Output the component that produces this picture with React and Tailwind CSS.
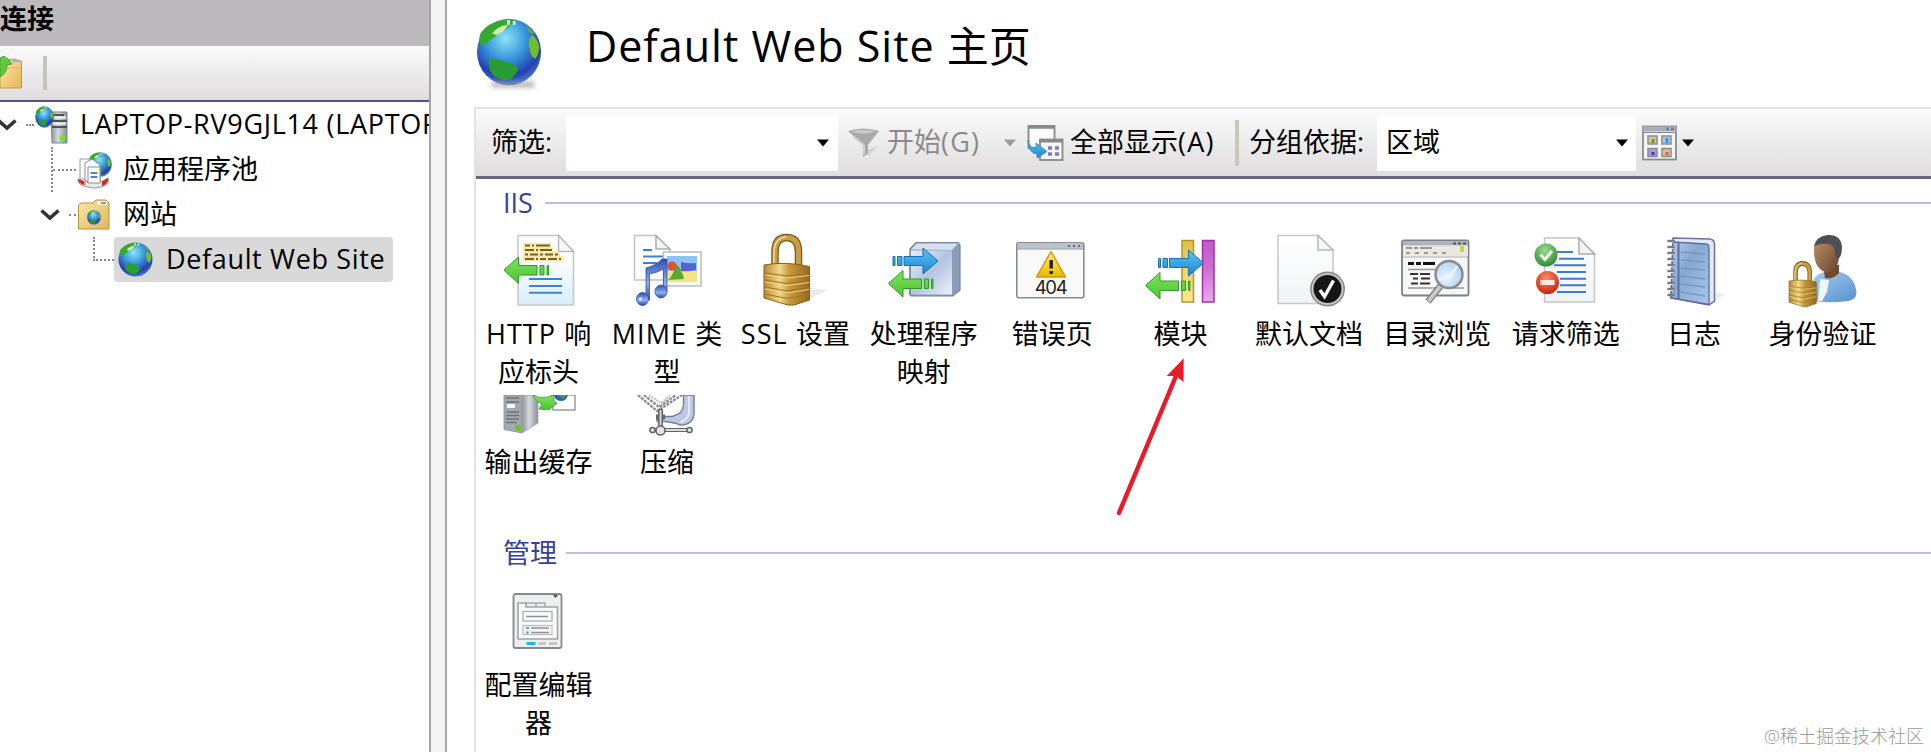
import React from 'react';

const Defs = () => (
  <svg width="0" height="0" className="absolute">
    <defs>
      <radialGradient id="ocean" cx="0.45" cy="0.3" r="0.75">
        <stop offset="0" stopColor="#8fe4f7" />
        <stop offset="0.4" stopColor="#3a9bdc" />
        <stop offset="0.75" stopColor="#2440b0" />
        <stop offset="1" stopColor="#4f8fd8" />
      </radialGradient>
      <linearGradient id="gold" x1="0" y1="0" x2="1" y2="0">
        <stop offset="0" stopColor="#b98a32" />
        <stop offset="0.35" stopColor="#f3d98a" />
        <stop offset="0.55" stopColor="#c99a3c" />
        <stop offset="1" stopColor="#96691c" />
      </linearGradient>
      <linearGradient id="folder" x1="0" y1="0" x2="1" y2="1">
        <stop offset="0" stopColor="#fbe7ac" />
        <stop offset="1" stopColor="#e5b654" />
      </linearGradient>
      <linearGradient id="page" x1="0" y1="0" x2="0" y2="1">
        <stop offset="0" stopColor="#ffffff" />
        <stop offset="1" stopColor="#f1f3f5" />
      </linearGradient>
      <linearGradient id="pageBlue" x1="0" y1="0" x2="0" y2="1">
        <stop offset="0.3" stopColor="#ffffff" />
        <stop offset="1" stopColor="#d8eefa" />
      </linearGradient>
      <linearGradient id="blueArrow" x1="0" y1="0" x2="0" y2="1">
        <stop offset="0" stopColor="#5cc3f2" />
        <stop offset="1" stopColor="#1c86d0" />
      </linearGradient>
      <linearGradient id="greenArrow" x1="0" y1="0" x2="0" y2="1">
        <stop offset="0" stopColor="#7fe45c" />
        <stop offset="1" stopColor="#4cc434" />
      </linearGradient>
      <linearGradient id="steel" x1="0" y1="0" x2="1" y2="0">
        <stop offset="0" stopColor="#8d949b" />
        <stop offset="0.45" stopColor="#d5d9dc" />
        <stop offset="1" stopColor="#8a9096" />
      </linearGradient>
      <linearGradient id="cube" x1="0" y1="0" x2="1" y2="1">
        <stop offset="0" stopColor="#e8effa" />
        <stop offset="0.5" stopColor="#b4c4e0" />
        <stop offset="1" stopColor="#e9f1fa" />
      </linearGradient>
      <linearGradient id="warn" x1="0" y1="0" x2="0" y2="1">
        <stop offset="0" stopColor="#fff07a" />
        <stop offset="1" stopColor="#eeb600" />
      </linearGradient>
      <linearGradient id="purple" x1="0" y1="0" x2="0" y2="1">
        <stop offset="0" stopColor="#c355cb" />
        <stop offset="0.5" stopColor="#cf72d6" />
        <stop offset="1" stopColor="#eba9ee" />
      </linearGradient>
      <linearGradient id="yellow" x1="0" y1="0" x2="0" y2="1">
        <stop offset="0" stopColor="#dfc04a" />
        <stop offset="1" stopColor="#fae98f" />
      </linearGradient>
      <radialGradient id="greenBall" cx="0.45" cy="0.3" r="0.7">
        <stop offset="0" stopColor="#9fdc90" />
        <stop offset="1" stopColor="#2c8a34" />
      </radialGradient>
      <radialGradient id="redBall" cx="0.45" cy="0.3" r="0.7">
        <stop offset="0" stopColor="#ff8a66" />
        <stop offset="1" stopColor="#cc2408" />
      </radialGradient>
      <radialGradient id="lens" cx="0.4" cy="0.6" r="0.7">
        <stop offset="0" stopColor="#eaf5ff" />
        <stop offset="1" stopColor="#a9cdf3" />
      </radialGradient>
      <linearGradient id="book" x1="0" y1="0" x2="1" y2="1">
        <stop offset="0" stopColor="#b4cde8" />
        <stop offset="0.4" stopColor="#86a8ce" />
        <stop offset="1" stopColor="#a8c8ea" />
      </linearGradient>
      <linearGradient id="skin" x1="0" y1="0" x2="1" y2="1">
        <stop offset="0" stopColor="#c09468" />
        <stop offset="1" stopColor="#64432c" />
      </linearGradient>
      <linearGradient id="shirt" x1="0" y1="0" x2="1" y2="1">
        <stop offset="0" stopColor="#a4cdf0" />
        <stop offset="1" stopColor="#5790cc" />
      </linearGradient>
      <linearGradient id="note" x1="0" y1="0" x2="0" y2="1">
        <stop offset="0" stopColor="#2f4fb4" />
        <stop offset="0.6" stopColor="#8fb0ee" />
        <stop offset="1" stopColor="#2444ac" />
      </linearGradient>
    </defs>
  </svg>
);

const Land = () => (
  <>
    <path d="M5 20Q2 29 5 36Q10 37 14 31Q21 26 25 19Q34 16 36 9L44 5Q36 0 27 3Q12 7 5 20Z" fill="#35a82f" />
    <path d="M17 21Q22 11 34 9Q31 18 22 23Z" fill="#d4ebae" />
    <path d="M33 3h3v6h-3zM39 4h3v5h-3z" fill="#e2f3ea" />
    <path d="M13 56Q19 53 27 57L42 64Q47 67 43 74Q38 84 31 84Q20 82 15 72Z" fill="#2a9c33" />
    <path d="M59 23Q65 27 67 38Q67 49 63 55Q57 52 57 42Q54 33 59 23Z" fill="#74bb2e" />
    <path d="M53 11Q60 16 62 22L57 20Z" fill="#5fb53b" />
  </>
);

const Globe = ({ className }) => (
  <svg viewBox="0 0 70 92" preserveAspectRatio="none" className={className}>
    <ellipse cx="35" cy="46" rx="34" ry="45" fill="url(#ocean)" />
    <Land />
  </svg>
);

const MiniGlobe = ({ x, y, w, h }) => (
  <svg x={x} y={y} width={w} height={h} viewBox="0 0 70 92" preserveAspectRatio="none">
    <ellipse cx="35" cy="46" rx="34" ry="45" fill="url(#ocean)" />
    <Land />
  </svg>
);

const BlueArrow = ({ x, y }) => (
  <g transform={`translate(${x} ${y})`} fill="url(#blueArrow)" stroke="#1a6fb5" strokeWidth="1">
    <path d="M0 9h2v9h-2zM4.500 9h4.500v9h-4.500zM11 9h19v-8.500l15 13-15 13v-8.500h-19z" />
  </g>
);

const GreenArrow = ({ x, y }) => (
  <g transform={`translate(${x} ${y})`} fill="url(#greenArrow)" stroke="#2f9a26" strokeWidth="1">
    <path d="M0 13.500L14.500 0.500V9H33v9.500H14.500V27zM36 9h4v9.500h-4zM43 9h1.500v9.500h-1.500z" />
  </g>
);

const IconBox = ({ children, className = 'w-20 h-[76px]', viewBox = '0 0 80 76' }) => (
  <svg viewBox={viewBox} className={`${className} shrink-0`}>{children}</svg>
);

const HttpIcon = () => (
  <IconBox>
    <path d="M20 3.500H60.500L75.500 20V73H20z" fill="url(#pageBlue)" stroke="#c3c7ca" strokeWidth="1.500" />
    <path d="M60.500 3.500V19.500H75.500z" fill="#f7f7f7" stroke="#b8bbbe" strokeWidth="1.500" />
    <path d="M25 11H53V15H55V20H62V24H66V29.500H25z" fill="#fde9a4" />
    <g stroke="#6f6430" strokeWidth="2">
      <path d="M27 13.500h27" strokeDasharray="5 2 2 2 14 2" />
      <path d="M27 18h28" strokeDasharray="9 2 2 2 12 2" />
      <path d="M27 22.500h35" strokeDasharray="3 2 8 2" />
      <path d="M27 27h38" strokeDasharray="9 2 2 2 6 2" />
    </g>
    <g stroke="#3f82c9" strokeWidth="2">
      <path d="M31 47h33M31 54h33M31 60.700h33" />
    </g>
    <GreenArrow x={6} y={24.500} />
  </IconBox>
);

const MimeIcon = () => (
  <IconBox>
    <path d="M8.500 3.500H30L44 18V48H8.500z" fill="#fdfdfd" stroke="#c0c4c8" strokeWidth="1.500" />
    <path d="M30 3.500V17H44z" fill="#f4f4f4" stroke="#aaaeb2" strokeWidth="1.500" />
    <path d="M17 18h9M17 24.500h22M17 31h14" stroke="#3f82c9" strokeWidth="1.800" />
    <path d="M37.500 20H75V54H37.500z" fill="#fdfdfd" stroke="#b9bcc0" strokeWidth="1.500" />
    <path d="M41 24h30v26h-30z" fill="#8cc4f4" />
    <path d="M41 39h30v11h-30z" fill="#f3e682" />
    <path d="M55 30q8 2 15 1v7q-8 2-15 1z" fill="#5a5fd0" />
    <path d="M42 48q5-4 8-16q5 3 8 15z" fill="#59a834" />
    <circle cx="46" cy="34" r="4.500" fill="#e3532a" />
    <g fill="url(#note)" stroke="#3450a8" strokeWidth="0.800">
      <path d="M20 36q11-3 16-9h5v33h-3.500V37q-7 4-14 5v26H20z" />
      <ellipse cx="16.500" cy="67" rx="6" ry="6.500" />
      <ellipse cx="35" cy="59.500" rx="6" ry="6.500" />
    </g>
    <circle cx="14.500" cy="67" r="1.800" fill="#d4e2ff" />
  </IconBox>
);

const PadLock = () => (
  <>
    <path d="M21 35V20Q21 5.500 32.500 5.500Q44.500 5.500 44.500 20V35" fill="none" stroke="#7d5818" strokeWidth="7.500" />
    <path d="M21 35V20Q21 5.500 32.500 5.500Q44.500 5.500 44.500 20V35" fill="none" stroke="#c89d48" strokeWidth="5" />
    <path d="M20 35V20Q20.500 6 32 5" fill="none" stroke="#f2dc9a" strokeWidth="1.500" />
    <path d="M10 33Q32 29 55.500 34.500V68L40 73H34L10 66z" fill="url(#gold)" stroke="#84601e" strokeWidth="1" />
    <path d="M11 41L33 44L55 41.500M11 48L33 51.500L55 48.500M11 55L33 59L55 55.500M11 62L33 66.500L55 62.500" stroke="#a07426" strokeWidth="1.200" fill="none" />
    <path d="M11 43L33 46L55 43.500M11 50L33 53.500L55 50.500M11 57L33 61L55 57.500" stroke="#f0d384" strokeWidth="1" fill="none" />
  </>
);

const SslIcon = () => (
  <IconBox>
    <path d="M54 56L74 58L55 67z" fill="#ebebeb" />
    <PadLock />
  </IconBox>
);

const HandlerIcon = () => (
  <IconBox>
    <path d="M27 17L33 10.500H75L77 13V58L70 64H28L26.500 62z" fill="#8c9bb7" stroke="#75839d" strokeWidth="1.200" />
    <path d="M28 17.500L33.500 11.500H75L69 18z" fill="#d5dfee" />
    <path d="M28 18.500H69V62.500H28z" fill="url(#cube)" />
    <BlueArrow x={10} y={15.500} />
    <GreenArrow x={5.500} y={38} />
  </IconBox>
);

const ErrorIcon = () => (
  <IconBox>
    <rect x="5.800" y="10.800" width="67" height="55" rx="2" fill="#fafafa" stroke="#868c92" strokeWidth="1.600" />
    <path d="M7 12h65v4.500H7z" fill="#b9c2cb" />
    <path d="M6 17h66" stroke="#8a9096" strokeWidth="1" />
    <path d="M57 14h2M62 14h2M67 14h2" stroke="#5f6870" strokeWidth="2" />
    <path d="M40 19.500L54.500 45H25.500z" fill="url(#warn)" stroke="#cf9a10" strokeWidth="1.500" strokeLinejoin="round" />
    <path d="M40.200 28v8.500M40.200 39v3" stroke="#222" strokeWidth="3.400" />
    <text x="40.200" y="62" textAnchor="middle" fontSize="18.500" textLength="33" fontFamily="Inter, sans-serif" fill="#222">404</text>
  </IconBox>
);

const ModuleIcon = () => (
  <IconBox>
    <rect x="42" y="8.500" width="11.500" height="61.500" fill="url(#yellow)" stroke="#b59622" strokeWidth="1.500" />
    <rect x="62.500" y="8.500" width="11.500" height="61.500" fill="url(#purple)" stroke="#a32fae" strokeWidth="1.500" />
    <BlueArrow x={18.500} y={17.500} />
    <GreenArrow x={5.500} y={40} />
  </IconBox>
);

const DefaultDocIcon = () => (
  <IconBox>
    <path d="M10 3.500H50L65 18V71.500H10z" fill="url(#page)" stroke="#c6c8ca" strokeWidth="1.500" />
    <path d="M50 3.500V18H65z" fill="#f7f7f7" stroke="#b5b8ba" strokeWidth="1.500" />
    <circle cx="59.500" cy="57" r="17.500" fill="#8e8e8e" />
    <circle cx="59.500" cy="57" r="15.800" fill="#c9c9c9" />
    <circle cx="59.500" cy="57" r="14" fill="#161616" />
    <path d="M52 58L56.500 64.500L65.500 48.500" fill="none" stroke="#fff" strokeWidth="3.400" />
  </IconBox>
);

const BrowseIcon = () => (
  <IconBox>
    <rect x="6" y="8.500" width="66.500" height="55" rx="2" fill="#f7f7f7" stroke="#7c8186" strokeWidth="1.800" />
    <path d="M7 9.500h65v4H7z" fill="#aeb4ba" />
    <path d="M57 11.500h3M62 11.500h3M67 11.500h3" stroke="#4d5560" strokeWidth="2" />
    <path d="M7 14h65v10H7z" fill="#e9e9e2" />
    <path d="M10 16h6M18 16h4M24 16h12M10 21h4M19 21h4M28 21h4M37 21h4M46 21h4" stroke="#999" strokeWidth="2" />
    <path d="M66 14v6" stroke="#cad63c" strokeWidth="4" />
    <path d="M7 25h65" stroke="#aaa" strokeWidth="1" />
    <path d="M12 31.500h6M20 31.500h5M27 31.500h12" stroke="#111" strokeWidth="3" />
    <path d="M12 37.500h32M12 56h34M52 56h16" stroke="#999" strokeWidth="1.500" />
    <path d="M14 42h8M24 42h10M17 46.500h5M25 46.500h9M15 51.500h7M24 51.500h10" stroke="#333" strokeWidth="2" />
    <path d="M44.500 54L32 69.500" stroke="#777" strokeWidth="6.500" />
    <path d="M44.500 54L32.500 69" stroke="#c9c9c9" strokeWidth="4" />
    <circle cx="53" cy="42.500" r="13.500" fill="url(#lens)" stroke="#8a8a8a" strokeWidth="2.500" />
    <path d="M43 46q10 3 18-12" stroke="#f2f9ff" strokeWidth="3" fill="none" opacity="0.700" />
  </IconBox>
);

const FilterIcon = () => (
  <IconBox>
    <path d="M19.500 6H54L69.500 23V70H19.500z" fill="url(#page)" stroke="#c6c8ca" strokeWidth="1.500" />
    <path d="M54 6V22H69.500z" fill="#f4f4f4" stroke="#a9abad" strokeWidth="1.500" />
    <path d="M32 20h16M34 26.700h25M29 33.300h32M32 40h29M35 46.700h26M35 53.300h26M32 60h29" stroke="#3f7cc4" strokeWidth="2" />
    <circle cx="21" cy="23" r="11.500" fill="url(#greenBall)" />
    <path d="M15.500 22.500L20 27.500L27 19" fill="none" stroke="#e8f6e4" strokeWidth="3" />
    <circle cx="22.500" cy="50.500" r="11.500" fill="url(#redBall)" />
    <path d="M15.500 50.500h14" stroke="#fbe9e4" strokeWidth="5" />
  </IconBox>
);

const LogIcon = () => (
  <IconBox>
    <path d="M60 60l12 2-11 8z" fill="#ececec" />
    <path d="M20 6L57 7Q61.500 8 61.500 12V69L56 73L18 66z" fill="#e4e9f6" stroke="#6872a4" strokeWidth="1.500" />
    <path d="M20 10L53 12Q56 12 56 16V72.500L18 66z" fill="url(#book)" stroke="#5c69a0" strokeWidth="1.300" />
    <path d="M25.500 11V68" stroke="#5570a8" strokeWidth="2" />
    <path d="M28 20L52 22M28 28L52 30M28 36L52 38M28 44L52 47M28 52L52 55M28 60L52 64" stroke="#6d92be" strokeWidth="1.500" opacity="0.800" />
    <path d="M15.500 9h5M15.500 15h5M15.500 21h5M15.500 27h5M15.500 33h5M15.500 39h5M15.500 45h5M15.500 51h5M15.500 57h5M15.500 63h5" stroke="#777b86" strokeWidth="2.600" strokeLinecap="round" />
    <path d="M14 10.500h6M14 16.500h6M14 22.500h6M14 28.500h6M14 34.500h6M14 40.500h6M14 46.500h6M14 52.500h6M14 58.500h6" stroke="#e6e8ee" strokeWidth="1" />
  </IconBox>
);

const AuthIcon = () => (
  <IconBox>
    <path d="M30 69V53Q31 43 42 40H58Q73 44 74.500 61Q74 69 62 69.500Q45 71 30 69z" fill="url(#shirt)" />
    <path d="M38 47L47 48L45 60L40 69H36z" fill="#eef5fb" />
    <path d="M41 33H57V41Q51 48 43 46z" fill="#71492f" />
    <path d="M32 13Q34 6 44 6Q56 6 57 18Q58 34 51 38Q44 43 38 37Q31 31 32 13z" fill="url(#skin)" />
    <path d="M33 14Q33 5 45 3Q59 2 60 15Q60 25 56 27L53 24Q54 15 49 13Q41 10 33 14z" fill="#4d5053" />
    <svg x="4" y="28" width="33" height="48" viewBox="5 0 55 75" preserveAspectRatio="none">
      <PadLock />
    </svg>
  </IconBox>
);

const CacheIcon = () => (
  <IconBox className="w-20 h-[41px]" viewBox="0 0 80 41">
    <path d="M6 0H24V38L6 34.500z" fill="#a4a9ae" stroke="#888e93" strokeWidth="0.800" />
    <path d="M24 0H35L40 7V28L24 38z" fill="url(#steel)" stroke="#a1a5a9" strokeWidth="0.800" />
    <path d="M8 3h13M8 7h13M8 17h13M8 20.500h13M8 24h13M8 27.500h11" stroke="#6d7378" strokeWidth="1.300" />
    <path d="M9 9h8v4h-8z" fill="#f6f8f9" />
    <circle cx="20" cy="33" r="3" fill="#68c916" />
    <path d="M53 0H77V15H55z" fill="#fff" stroke="#9a9a9a" strokeWidth="1.500" />
    <path d="M56 0Q57 6 64 6Q69 5 70 0z" fill="#2a63b8" />
    <path d="M60 0l5 4 4-4z" fill="#42a340" />
    <path d="M35 0Q42 4 50 2L56 0L56 6L59 8L51 15L41 14L44 9Q38 7 35 0z" fill="url(#greenArrow)" stroke="#349c2d" strokeWidth="0.800" />
  </IconBox>
);

const CompressIcon = () => (
  <IconBox className="w-20 h-[41px]" viewBox="0 0 80 41">
    <path d="M12 0L31 16L56 0M18 0L33 12L50 0" fill="none" stroke="#8b8e92" strokeWidth="2.400" strokeDasharray="3 1" />
    <path d="M23 0L35 8L45 0" fill="none" stroke="#b9bcc0" strokeWidth="2" strokeDasharray="2 1" />
    <path d="M57.500 0H68V19Q67 30 54 30Q49 27 31 26V21.500H46Q57 19 57.500 10z" fill="#bdc9e4" stroke="#727c92" strokeWidth="1.400" />
    <path d="M63 1V18Q61 26 54 27" stroke="#e4ebf8" strokeWidth="2" fill="none" />
    <path d="M34.500 14V34M30 22h9" stroke="#60656c" strokeWidth="5" />
    <path d="M34.500 15V33" stroke="#d0d3d8" strokeWidth="2" />
    <path d="M26 35H64" stroke="#60656c" strokeWidth="4" />
    <path d="M27 35H63" stroke="#dadcdf" strokeWidth="1.800" />
    <g fill="#e1e3e6" stroke="#60656c" strokeWidth="1.500">
      <circle cx="26.500" cy="35" r="2.600" />
      <circle cx="34.500" cy="35.500" r="4.500" />
      <circle cx="63.500" cy="35" r="2.600" />
    </g>
  </IconBox>
);

const ConfigIcon = () => (
  <IconBox className="w-20 h-[62px]" viewBox="0 0 80 62">
    <rect x="15.500" y="4" width="48" height="54" rx="2" fill="#efefef" stroke="#85898d" strokeWidth="1.800" />
    <path d="M55 5h5l-2.500 3z" fill="#46505a" />
    <path d="M20 49V13H28V17H59.500V49z" fill="#fbfbfb" stroke="#a0a4a8" strokeWidth="1.600" />
    <path d="M28 17V13H47V17M38 13V17" fill="none" stroke="#a9adb0" strokeWidth="1.500" />
    <rect x="25" y="21.500" width="29" height="9.500" fill="#fff" stroke="#aeb2b5" strokeWidth="1.400" />
    <path d="M28 26.500h22" stroke="#8f9396" strokeWidth="1.600" />
    <rect x="25" y="35.500" width="29" height="9" fill="#f4f4f4" stroke="#b9bcc0" strokeWidth="1.200" />
    <path d="M33 38h18M33 42.500h18" stroke="#8f9396" strokeWidth="1.600" />
    <path d="M28 38h3" stroke="#25b8d8" strokeWidth="2" />
    <path d="M28.500 42.500h2" stroke="#777" strokeWidth="2" />
    <path d="M28.500 53.500h9" stroke="#1fb4ea" strokeWidth="3" />
    <path d="M40 53.500h8M51 53.500h8" stroke="#c4c6c8" strokeWidth="3" />
  </IconBox>
);

const iisRow = [
  { latin: 'HTTP ', lines: ['响', '应标头'], icon: HttpIcon },
  { latin: 'MIME ', lines: ['类', '型'], icon: MimeIcon },
  { latin: 'SSL ', lines: ['设置'], icon: SslIcon },
  { lines: ['处理程序', '映射'], icon: HandlerIcon },
  { lines: ['错误页'], icon: ErrorIcon },
  { lines: ['模块'], icon: ModuleIcon },
  { lines: ['默认文档'], icon: DefaultDocIcon },
  { lines: ['目录浏览'], icon: BrowseIcon },
  { lines: ['请求筛选'], icon: FilterIcon },
  { lines: ['日志'], icon: LogIcon },
  { lines: ['身份验证'], icon: AuthIcon },
];

const iisClipped = [
  { lines: ['输出缓存'], icon: CacheIcon },
  { lines: ['压缩'], icon: CompressIcon },
];

const manageRow = [{ lines: ['配置编辑', '器'], icon: ConfigIcon }];

const FeatureRow = ({ items, className, gap = 'gap-[7px]' }) => (
  <div className={`flex gap-[8.4px] pl-[1.6px] ${className}`}>
    {items.map(({ latin, lines, icon: Icon }) => (
      <div key={lines[0]} className={`w-[120px] shrink-0 flex flex-col items-center ${gap}`}>
        <Icon />
        <div className="pl-[2px] leading-[38px] text-center whitespace-nowrap">
          {lines.map((line, i) => (
            <div key={line}>
              {latin && i === 0 && <span className="tracking-[1.1px]">{latin}</span>}
              {line}
            </div>
          ))}
        </div>
      </div>
    ))}
  </div>
);

const GroupTitle = ({ title, className, gap = 'ml-[9px]' }) => (
  <div className={`flex items-center pl-[27px] ${className}`}>
    <span className="text-[#34429c] leading-[38px]">{title}</span>
    <div className={`${gap} h-[2px] flex-1 bg-[#b9c0e2]`} />
  </div>
);

const Caret = ({ className }) => (
  <svg viewBox="0 0 12 8" className={`w-3 h-2 shrink-0 ${className}`}>
    <path d="M0 0.500H12L6 7.500z" fill="currentColor" />
  </svg>
);

const Chevron = () => (
  <svg viewBox="0 0 20 13" className="w-5 h-[13px] shrink-0">
    <path d="M1.500 2.500L10 10L18.500 2.500" fill="none" stroke="#333" strokeWidth="3.600" />
  </svg>
);

const Sidebar = () => (
  <aside className="w-[429px] shrink-0 overflow-hidden whitespace-nowrap">
    <div className="h-[46px] bg-[#bcbabc] font-bold leading-[38px]">连接</div>
    <div className="h-[56px] flex items-center bg-linear-to-b from-[#fbfbfb] to-[#dfddde] border-b-2 border-[#54517c]">
      <svg viewBox="0 0 23 34" className="w-[23px] h-[34px]">
        <path d="M0 5L13 3L21.500 5V32H0z" fill="url(#folder)" stroke="#c49a45" strokeWidth="1" />
        <path d="M12 5h8" stroke="#8db6d8" strokeWidth="2" />
        <path d="M0 12h21" stroke="#d9b25c" strokeWidth="1" />
        <path d="M0 2L4 0L9 4L12 8L7 9Q7 17 0 21z" fill="#62c840" stroke="#3f9a2b" strokeWidth="0.800" />
      </svg>
      <div className="ml-[20px] w-[4px] h-[34px] bg-[#c4c4b8]" />
    </div>

    <div className="h-[45px] flex items-center">
      <div className="-ml-[3px] flex shrink-0"><Chevron /></div>
      <div className="ml-[9px] w-[8px] shrink-0 border-t-2 border-dotted border-[#888]" />
      <svg viewBox="0 0 34 38" className="ml-[1px] w-[34px] h-[38px] shrink-0">
        <path d="M16 6H32V37H17z" fill="url(#steel)" stroke="#7b8389" strokeWidth="1" />
        <path d="M19 9h10M17 15h15M17 21h15" stroke="#4c545a" strokeWidth="1.800" />
        <path d="M18 17.500h13M18 11.500h13" stroke="#f2f4f5" strokeWidth="2" />
        <circle cx="27.500" cy="32" r="2.800" fill="#7be01c" />
        <MiniGlobe x={0} y={0} w={19} h={22} />
      </svg>
      <span className="ml-[11px] tracking-[0.7px]">LAPTOP-RV9GJL14 (LAPTOP</span>
    </div>

    <div className="h-[45px] flex items-center">
      <div className="ml-[51px] h-full w-[25px] flex items-center border-l-2 border-dotted border-[#888]">
        <div className="w-full border-t-2 border-dotted border-[#888]" />
      </div>
      <svg viewBox="0 0 36 38" className="w-9 h-[38px]">
        <MiniGlobe x={12} y={1} w={24} h={25} />
        <path d="M2 28Q1 33 8 35Q18 39 28 35Q34 32 32 27L26 31H8z" fill="#e8e8e8" stroke="#9a9a9a" strokeWidth="1" />
        <path d="M2 28L8 30L9 34Q2 33 2 28zM32 27L26 30V35Q33 33 32 27z" fill="#cf3026" />
        <path d="M4 8H14V28H4z" fill="#fafafa" stroke="#9c9c9c" strokeWidth="1" />
        <path d="M9 12L16 8L24 14V30H9z" fill="#fbfbfb" stroke="#8f8f8f" strokeWidth="1" />
        <path d="M12 16H24V32H12z" fill="#fff" stroke="#8f8f8f" strokeWidth="1" />
        <path d="M14.500 22h7M14.500 26h7" stroke="#5b83c4" strokeWidth="1.800" />
      </svg>
      <span className="ml-[11px]">应用程序池</span>
    </div>

    <div className="h-[45px] flex items-center">
      <div className="ml-[40px] flex"><Chevron /></div>
      <div className="ml-[9px] w-[7px] border-t-2 border-dotted border-[#888]" />
      <svg viewBox="0 0 34 32" className="ml-[1px] w-[34px] h-8">
        <path d="M1.500 6L4 4H16L19 1H29L32 4V30H1.500z" fill="url(#folder)" stroke="#b8923e" strokeWidth="1" />
        <path d="M20 4h10" stroke="#fff" strokeWidth="3" />
        <path d="M24 4h5" stroke="#6aa6d8" strokeWidth="2" />
        <MiniGlobe x={10} y={11} w={14} h={15} />
      </svg>
      <span className="ml-[12px]">网站</span>
    </div>

    <div className="h-[45px] flex items-center">
      <div className="ml-[93px] mb-[21px] w-[21px] h-[24px] border-l-2 border-b-2 border-dotted border-[#888]" />
      <div className="w-[279px] h-[45px] flex items-center rounded bg-[#d9d9d9]">
        <Globe className="ml-[4px] w-[35px] h-[35px]" />
        <span className="ml-[13px] tracking-[0.65px]">Default Web Site</span>
      </div>
    </div>
  </aside>
);

const FilterBar = () => (
  <div className="h-[72px] flex items-center border-t-2 border-[#e3e3e3] border-b-[3px] border-b-[#66647e] bg-linear-to-b from-[#fbfbfb] to-[#dfddde] whitespace-nowrap">
    <span className="ml-[15px] w-[75px] shrink-0">筛选:</span>
    <div className="w-[272px] h-[56px] shrink-0 flex items-center justify-end bg-white pr-[9px]">
      <Caret className="text-black" />
    </div>
    <svg viewBox="0 0 32 30" className="ml-[10px] w-8 h-[30px] shrink-0">
      <path d="M14 24L30 18L20 28z" fill="#d2d2d2" />
      <path d="M0 3Q15 -2 31 3L20 17V25L15 29V17z" fill="#a9a9a9" />
      <path d="M3 3.500Q15 0 28 3.500Q16 8 3 3.500z" fill="#c9c9c9" />
      <path d="M6 9L16 17V26" fill="none" stroke="#cfcfcf" strokeWidth="2" />
    </svg>
    <span className="ml-[7px] w-[117px] shrink-0 text-[#8a8a8a]">开始<span className="tracking-[1.2px]">(G)</span></span>
    <Caret className="text-[#9b9b9b]" />
    <svg viewBox="0 0 37 38" className="ml-[11px] w-[37px] h-[38px] shrink-0">
      <rect x="1.500" y="2" width="26" height="22" fill="#fcfcfc" stroke="#888" strokeWidth="1.800" />
      <path d="M1 3h27" stroke="#888" strokeWidth="3.500" />
      <rect x="13" y="15.500" width="22.500" height="20.500" fill="#f6f6f8" stroke="#888" strokeWidth="1.800" />
      <path d="M12 17h24" stroke="#888" strokeWidth="3" />
      <path d="M21 24h4M28 24h4M21 30h4M28 30h4" stroke="#7f7cb8" strokeWidth="3.500" />
      <path d="M1 16Q2 24 9 24V19L20 27.500L10 34V30Q1 29 1 16z" fill="url(#blueArrow)" stroke="#2f86bb" strokeWidth="0.800" />
    </svg>
    <span className="ml-[6px] w-[165px] shrink-0">全部显示<span className="tracking-[1.2px]">(A)</span></span>
    <div className="w-[4px] h-[46px] shrink-0 bg-[#c8c8b6]" />
    <span className="ml-[10px] w-[128px] shrink-0">分组依据:</span>
    <div className="w-[259px] h-[56px] shrink-0 flex items-center justify-between bg-white pl-[9px] pr-[8px]">
      <span>区域</span>
      <Caret className="text-black" />
    </div>
    <svg viewBox="0 0 35 36" className="ml-[6px] w-[35px] h-9 shrink-0">
      <rect x="1" y="1.500" width="33" height="33" fill="#f4f4f0" stroke="#8a8d90" strokeWidth="1.800" />
      <path d="M1 4h33" stroke="#a9afb8" strokeWidth="5" />
      <path d="M2 7.500h31" stroke="#868a90" strokeWidth="1" />
      <path d="M24 4h3M29 4h3" stroke="#7a828d" strokeWidth="3" />
      <g stroke="#8a8d90" strokeWidth="1.500">
        <rect x="6" y="11" width="9" height="8" fill="#c9ca8c" />
        <rect x="20" y="11" width="9" height="8" fill="#a5cdea" />
        <rect x="6" y="23.500" width="9" height="8" fill="#a69be2" />
        <rect x="20" y="23.500" width="9" height="8" fill="#e6b69a" />
      </g>
      <path d="M9.500 14h3v4h-3z" fill="#8c8e2c" />
      <path d="M23.500 13h3v5h-3z" fill="#4a94cc" />
      <path d="M9.500 27h3v3h-3z" fill="#4934c0" />
      <path d="M23.500 27h3v3h-3z" fill="#cc6b34" />
    </svg>
    <Caret className="ml-[5px] text-black" />
  </div>
);

const App = () => {
  return (
    <div className="relative w-[1931px] h-[752px] flex overflow-hidden bg-white text-black text-[27px] font-['Open_Sans','Noto_Sans_CJK_SC',sans-serif]">
      <Defs />
      <Sidebar />
      <div className="w-[18px] shrink-0 bg-[#f4f4f4] border-x-2 border-[#a6a6a6]" />
      <main className="flex-1 min-w-0 pl-[27px] overflow-hidden">
        <header className="h-[107px] flex items-start whitespace-nowrap">
          <div className="mt-[18px] ml-[2px] flex flex-col items-center">
            <Globe className="relative w-[66px] h-[68px]" />
            <div className="-mt-[5px] w-11 h-[7px] translate-x-1 rounded-full bg-[#9a9a9a]/60 blur-[2px]" />
          </div>
          <h1 className="ml-[44px] mt-[16px] text-[42px] leading-[60px]">
            <span className="text-[43px] tracking-[1px]">Default Web Site </span>主页
          </h1>
        </header>
        <section className="border-l-2 border-[#e3e3e3] h-[645px]">
          <FilterBar />
          <GroupTitle title="IIS" className="h-[48px]" gap="ml-[12px]" />
          <FeatureRow items={iisRow} className="mt-[5px] h-[163px]" />
          <FeatureRow items={iisClipped} className="h-[139px]" />
          <GroupTitle title="管理" className="h-[38px]" />
          <FeatureRow items={manageRow} className="mt-[18px]" gap="gap-[14px]" />
        </section>
      </main>

      <svg viewBox="0 0 80 170" className="absolute left-[1110px] top-[352px] w-[80px] h-[170px]">
        <path d="M9 161L66 24" stroke="#e81c28" strokeWidth="4.500" strokeLinecap="round" />
        <path d="M73.700 6.300L56.700 24L66 24L73.500 30z" fill="#e81c28" />
      </svg>
      <div className="absolute right-[7px] bottom-[3px] text-[18px] leading-[26px] font-light text-[#999]">
        @稀土掘金技术社区
      </div>
    </div>
  );
};

export default App;
